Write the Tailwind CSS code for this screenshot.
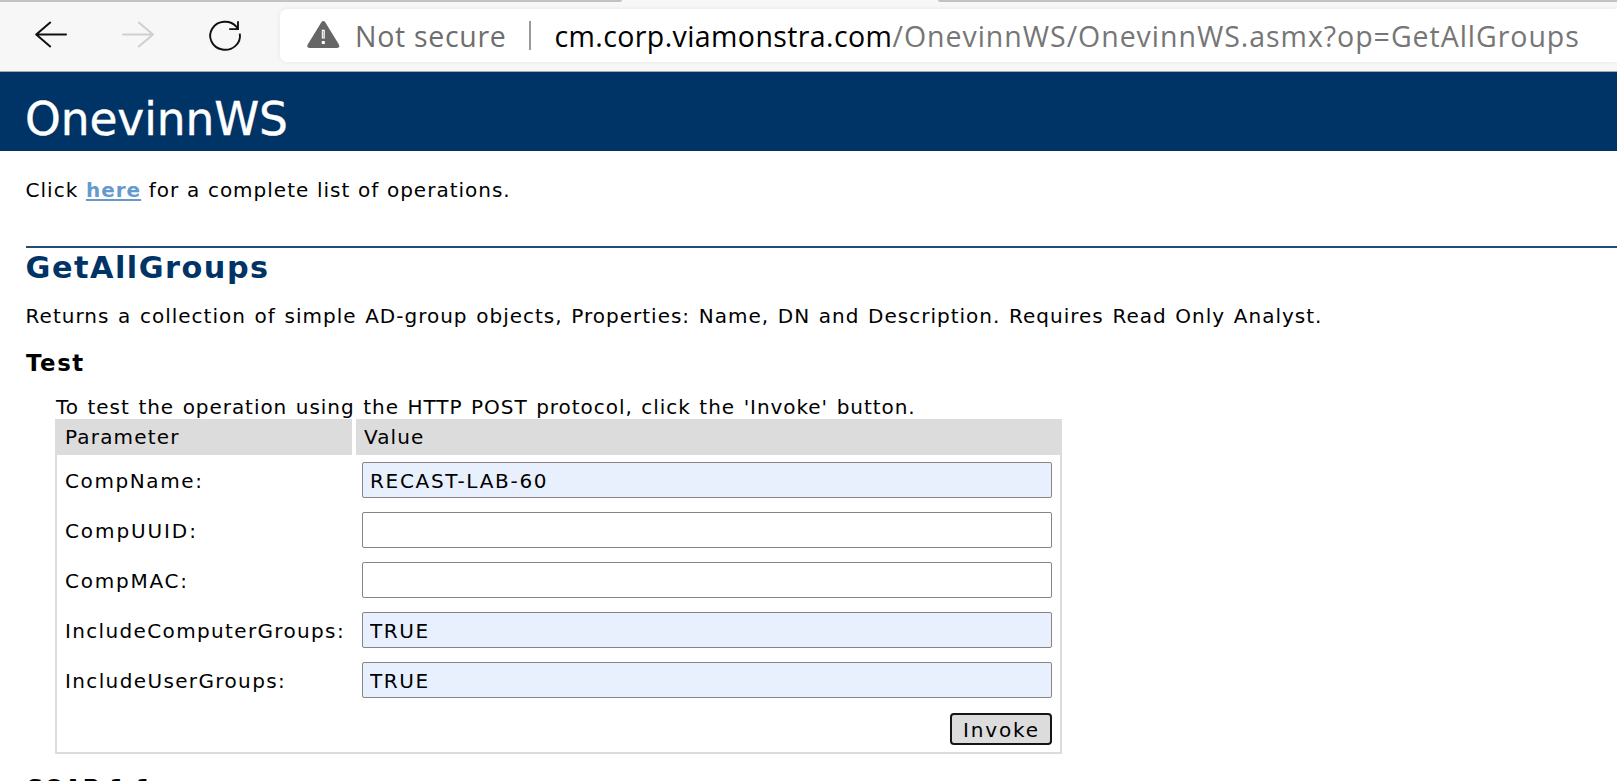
<!DOCTYPE html>
<html lang="en">
<head>
<meta charset="utf-8">
<title>OnevinnWS Web Service</title>
<script src="https://cdn.jsdelivr.net/npm/@tailwindcss/browser@4"></script>
</head>
<body class="h-[781px] overflow-hidden bg-white font-['DejaVu_Sans',sans-serif] text-[20px] leading-6 text-black">
<div class="flex h-[781px] flex-col overflow-hidden">

  <!-- browser toolbar -->
  <div class="h-[72px] shrink-0 border-b border-[#a3a8ad] bg-[#f7f7f7]">
    <div class="flex h-[2px] justify-between">
      <div class="w-[622px] rounded-br-sm bg-[#c3c3c3]"></div>
      <div class="w-[679px] rounded-bl-sm bg-[#c3c3c3]"></div>
    </div>
    <div class="flex h-[69px] pt-[7px]">
      <svg class="h-[60px] w-[280px] shrink-0" viewBox="0 9 280 60" fill="none" stroke-width="2" stroke-linecap="round" stroke-linejoin="round">
        <path stroke="#111" d="M66 34.6H36.2M50.2 22.6 36.2 34.6 50.2 46.4"/>
        <path stroke="#cfcfcf" d="M123 34.6H153M138.8 22.6 153 34.6 138.8 46.4"/>
        <path stroke="#111" stroke-width="1.9" stroke-linecap="butt" stroke-linejoin="miter" d="M239.8 33.6A14.9 14 0 1 1 236.6 26.9L238 29M238 21.2V29.1H229.2"/>
      </svg>
      <div class="flex h-[53px] flex-1 rounded-l-[7px] bg-white pl-[27px] font-['Open_Sans','Noto_Sans',sans-serif] text-[28.5px] leading-[55px] whitespace-nowrap shadow-[0_0_5px_rgba(0,0,0,0.07)]">
        <svg class="mt-3 h-[28px] w-[33px] shrink-0" viewBox="0 0 33 28">
          <path fill="#666" d="M14.2 1.5Q16.3-1.3 18.4 1.5L31.9 23.6Q33.2 27 30 27H2.6Q-.6 27 .7 23.6Z"/>
          <path fill="none" stroke="#fff" stroke-width="3" d="M16.3 8.8V17.6M16.3 20V23"/>
          <path fill="none" stroke="#aaa" stroke-width="1" d="M16.3 10V16.7"/>
        </svg>
        <span class="ml-[15px] w-[174px] tracking-[0.7px] text-[#6e6e6e]">Not secure</span>
        <span class="mt-3 h-[29px] w-[1.5px] bg-[#9a9a9a]"></span>
        <span class="ml-[24px] w-[338px] tracking-[0.4px]">cm.corp.viamonstra.com</span>
        <span class="tracking-[0.97px] text-[#767676]">/OnevinnWS/OnevinnWS.asmx?op=GetAllGroups</span>
      </div>
    </div>
  </div>

  <!-- service banner -->
  <div class="h-[79px] shrink-0 bg-[#003366] pt-[19px] pl-[25px] text-[45.5px] leading-[58px] tracking-[-0.1px] text-white [-webkit-text-stroke:0.4px_white]">OnevinnWS</div>

  <main class="pl-[25px]">
    <p class="mt-[27px] pl-[0.6px] tracking-[1px] [word-spacing:0.3px]">Click <a class="font-bold tracking-[1px] text-[#6699cc] underline decoration-[1.5px] underline-offset-[2px]">here</a> for a complete list of operations.</p>

    <div class="mt-[44px] ml-[0.6px] h-[2px] bg-[#1f4c7a]"></div>
    <h2 class="mt-[4px] pl-[0.6px] text-[30.3px] leading-8 font-bold tracking-[1.5px] text-[#003366]">GetAllGroups</h2>
    <p class="mt-[20px] pl-[0.6px] tracking-[1px] whitespace-nowrap [word-spacing:1.3px]">Returns a collection of simple AD-group objects, Properties: Name, DN and Description. Requires Read Only Analyst.</p>
    <h3 class="mt-[23px] pl-px text-[22.8px] font-bold tracking-[1.6px]">Test</h3>

    <div class="mt-[20px] w-[1007px] pl-[30px]">
      <p class="h-[24px] pl-px tracking-[0.95px] whitespace-nowrap [word-spacing:1.3px]">To test the operation using the HTTP POST protocol, click the 'Invoke' button.</p>
    </div>
    <form class="ml-[30px] h-[335px] w-[1007px] border-2 border-t-0 border-[#dcdcdc]">
      <div class="-mx-[2px] flex h-[36px] gap-1 leading-[37px]">
        <div class="w-[297px] bg-[#dcdcdc] pl-[10px] tracking-[1.17px]">Parameter</div>
        <div class="flex-1 bg-[#dcdcdc] pl-[8px] tracking-[1.1px]">Value</div>
      </div>
      <label class="flex h-[50px] items-center pr-[8px] pl-[8px]"><span class="w-[297px] pt-[2px] tracking-[1.6px]">CompName:</span><input class="h-[36px] flex-1 rounded-[2px] border border-[#858585] bg-[#e8f0fe] pt-[2px] pl-[7px] tracking-[1.7px]" value="RECAST-LAB-60"></label>
      <label class="flex h-[50px] items-center pr-[8px] pl-[8px]"><span class="w-[297px] pt-[2px] tracking-[1.9px]">CompUUID:</span><input class="h-[36px] flex-1 rounded-[2px] border border-[#858585] bg-white pt-[2px] pl-[7px]"></label>
      <label class="flex h-[50px] items-center pr-[8px] pl-[8px]"><span class="w-[297px] pt-[2px] tracking-[1.75px]">CompMAC:</span><input class="h-[36px] flex-1 rounded-[2px] border border-[#858585] bg-white pt-[2px] pl-[7px]"></label>
      <label class="flex h-[50px] items-center pr-[8px] pl-[8px]"><span class="w-[297px] pt-[2px] tracking-[1.35px]">IncludeComputerGroups:</span><input class="h-[36px] flex-1 rounded-[2px] border border-[#858585] bg-[#e8f0fe] pt-[2px] pl-[7px] tracking-[1.6px]" value="TRUE"></label>
      <label class="flex h-[50px] items-center pr-[8px] pl-[8px]"><span class="w-[297px] pt-[2px] tracking-[1.37px]">IncludeUserGroups:</span><input class="h-[36px] flex-1 rounded-[2px] border border-[#858585] bg-[#e8f0fe] pt-[2px] pl-[7px] tracking-[1.6px]" value="TRUE"></label>
      <div class="flex justify-end pt-[8px] pr-[8px]">
        <button type="button" class="h-[32px] w-[102px] rounded-[4px] border-2 border-[#151515] bg-[#dcdcdc] pt-[2px] pl-[11px] text-left leading-[26px] tracking-[1.84px]">Invoke</button>
      </div>
    </form>
    <h3 class="mt-[22px] pl-[2px] text-[22.5px] font-bold tracking-[1.2px]">SOAP 1.1</h3>
  </main>
</div>
</body>
</html>
